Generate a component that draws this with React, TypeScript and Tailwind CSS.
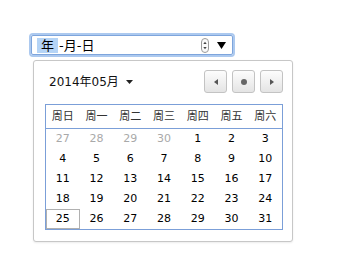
import React from 'react';

const weekDays = ['周日', '周一', '周二', '周三', '周四', '周五', '周六'];

type Day = { n: number; muted?: boolean; selected?: boolean };

const days: Day[] = [
  { n: 27, muted: true },
  { n: 28, muted: true },
  { n: 29, muted: true },
  { n: 30, muted: true },
  ...Array.from({ length: 31 }, (_, i) => ({ n: i + 1, selected: i + 1 === 25 })),
];

function NavButton({ children }: { children: React.ReactNode }) {
  return (
    <button className="flex h-[23px] w-[23px] items-center justify-center rounded-[3px] border border-[#c3c3c3] bg-gradient-to-b from-[#fdfdfd] to-[#e4e4e4]">
      {children}
    </button>
  );
}

export default function App() {
  return (
    <div className="min-h-screen bg-white pl-[29px] pt-[33px] font-['DejaVu_Sans','Noto_Sans_CJK_SC',sans-serif] text-black">
      {/* focused date input */}
      <div className="h-[24px] w-[206px] rounded-[4px] border-2 border-[#acc9ef]">
        <div className="flex h-full items-center rounded-[2px] border border-[#7ea5dc] pl-[5px] pr-[6px] text-[13px]">
          <span className="bg-[#b5d4f6] px-[4px] leading-[15px]">年</span>
          <span className="ml-[1px] leading-[15px]">-月-日</span>
          <span className="ml-auto flex items-center gap-[8px]">
            <svg width="8" height="15" viewBox="0 0 8 15">
              <rect x="0.5" y="0.5" width="7" height="14" rx="3.5" fill="#fafafa" stroke="#9a9a9a" />
              <path d="M2.3 6 L4 3.8 L5.7 6 Z" fill="#444" />
              <path d="M2.3 9 L4 11.2 L5.7 9 Z" fill="#444" />
            </svg>
            <svg width="9" height="7" viewBox="0 0 9 7">
              <path d="M0 0 H9 L4.5 7 Z" fill="#000" />
            </svg>
          </span>
        </div>
      </div>

      {/* picker popup */}
      <div className="ml-[4px] mt-[3px] h-[182px] w-[260px] rounded-[3px] border border-[#c7c7c7] bg-white pl-[11px] pr-[9px] pt-[9px] shadow-[0_1px_2px_rgba(0,0,0,0.08)]">
        <div className="flex h-[23px] items-center justify-between">
          <div className="flex items-center pl-[4px] text-[12px] text-[#111]">
            <span>2014年05月</span>
            <svg className="ml-[7px]" width="7" height="4" viewBox="0 0 7 4">
              <path d="M0 0 H7 L3.5 4 Z" fill="#222" />
            </svg>
          </div>
          <div className="flex gap-[5px]">
            <NavButton>
              <svg width="4" height="6" viewBox="0 0 4 6">
                <path d="M4 0 V6 L0 3 Z" fill="#555" />
              </svg>
            </NavButton>
            <NavButton>
              <span className="h-[6px] w-[6px] rounded-full bg-[#666]" />
            </NavButton>
            <NavButton>
              <svg width="4" height="6" viewBox="0 0 4 6">
                <path d="M0 0 V6 L4 3 Z" fill="#555" />
              </svg>
            </NavButton>
          </div>
        </div>

        <div className="mt-[11px] w-[238px] border border-[#7b9fd8]">
          <div className="grid h-[24px] grid-cols-7 items-center border-b border-[#7b9fd8] pt-[1px] text-center text-[11px] text-[#333]">
            {weekDays.map((d) => (
              <span key={d}>{d}</span>
            ))}
          </div>
          <div className="grid grid-cols-7 text-center text-[11px]">
            {days.map((d, i) => (
              <span
                key={i}
                className={
                  'flex h-[20px] items-center justify-center pt-[1px] ' +
                  (d.muted ? 'text-[#a9a9a9]' : 'text-black') +
                  (d.selected ? ' border border-[#b0b0b0]' : '')
                }
              >
                {d.n}
              </span>
            ))}
          </div>
        </div>
      </div>
    </div>
  );
}
